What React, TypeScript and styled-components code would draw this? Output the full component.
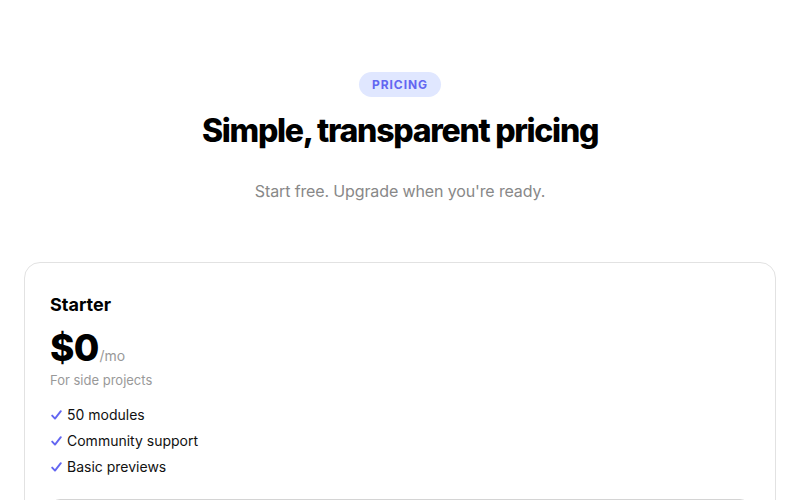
import React from "react";
import styled, { createGlobalStyle } from "styled-components";

const Global = createGlobalStyle`
  html, body { margin: 0; padding: 0; background: #ffffff; }
  body { font-family: Inter, "Noto Sans", "Liberation Sans", sans-serif; color: #0a0a0a; -webkit-font-smoothing: antialiased; }
  * { box-sizing: border-box; }
`;

const Page = styled.main`
  display: flex;
  flex-direction: column;
  align-items: center;
  padding: 72px 24px 0;
  height: 500px;
  overflow: hidden;
`;

const Badge = styled.span`
  display: inline-block;
  padding: 4px 13px;
  border-radius: 999px;
  background: #e0e7ff;
  color: #6366f1;
  font-size: 12px;
  line-height: 17px;
  font-weight: 700;
  letter-spacing: 0.08em;
  text-transform: uppercase;
`;

const Title = styled.h1`
  margin: 14px 0 0;
  font-size: 32px;
  line-height: 40px;
  font-weight: 800;
  letter-spacing: -0.04em;
  color: #000;
`;

const Subtitle = styled.p`
  margin: 28px 0 0;
  font-size: 16px;
  line-height: 24px;
  letter-spacing: -0.008em;
  color: #888;
`;

const Card = styled.section`
  align-self: stretch;
  margin-top: 59px;
  border: 1px solid #e2e2e2;
  border-radius: 16px;
  padding: 30px 25px 24px;
  display: flex;
  flex-direction: column;
`;

const PlanName = styled.h2`
  margin: 0;
  font-size: 18px;
  line-height: 24px;
  font-weight: 700;
  color: #000;
`;

const PriceRow = styled.div`
  margin-top: 11px;
  display: flex;
  align-items: baseline;
`;

const Amount = styled.span`
  font-size: 37px;
  line-height: 40px;
  font-weight: 800;
  letter-spacing: -0.02em;
  color: #000;
`;

const Period = styled.span`
  font-size: 14px;
  color: #999;
  margin-left: 1px;
`;

const Note = styled.p`
  margin: 3px 0 0;
  font-size: 13px;
  line-height: 18px;
  color: #999;
`;

const Features = styled.ul`
  list-style: none;
  margin: 13px 0 0;
  padding: 0 0 0 1px;
`;

const Feature = styled.li`
  display: flex;
  align-items: center;
  gap: 5px;
  font-size: 14px;
  line-height: 26px;
  color: #111;
`;

const Check = styled.svg`
  width: 11px;
  height: 12px;
  flex: none;
`;

const Button = styled.button`
  margin-top: 19px;
  height: 44px;
  border: 1px solid #d4d4d4;
  border-radius: 10px;
  background: #fff;
  font: inherit;
  font-size: 14px;
  font-weight: 600;
  color: #111;
`;

const CheckIcon = () => (
  <Check viewBox="0 0 11 12" fill="none">
    <path d="M1.2 6.6 L4 9.6 L9.8 2.2" stroke="#6366f1" strokeWidth="1.9" strokeLinecap="round" strokeLinejoin="round" />
  </Check>
);

const features = ["50 modules", "Community support", "Basic previews"];

export default function App() {
  return (
    <>
      <Global />
      <Page>
        <Badge>Pricing</Badge>
        <Title>Simple, transparent pricing</Title>
        <Subtitle>Start free. Upgrade when you're ready.</Subtitle>
        <Card>
          <PlanName>Starter</PlanName>
          <PriceRow>
            <Amount>$0</Amount>
            <Period>/mo</Period>
          </PriceRow>
          <Note>For side projects</Note>
          <Features>
            {features.map((f) => (
              <Feature key={f}>
                <CheckIcon />
                {f}
              </Feature>
            ))}
          </Features>
          <Button>Get started</Button>
        </Card>
      </Page>
    </>
  );
}
